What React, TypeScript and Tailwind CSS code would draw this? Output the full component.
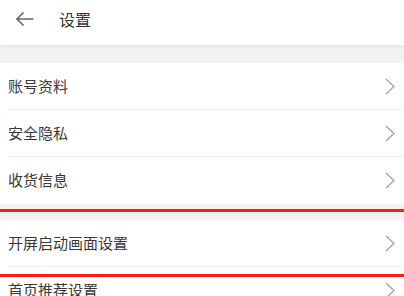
const groups = [
  ["账号资料", "安全隐私", "收货信息"],
  ["开屏启动画面设置", "首页推荐设置"],
];

function Row({ label, last }: { label: string; last: boolean }) {
  return (
    <div className="bg-white pl-2">
      <div className={`flex h-[47px] items-center justify-between pr-[9px] ${last ? "" : "border-b border-[#f2f2f2]"}`}>
        <span className="text-[15px] text-[#383838]">{label}</span>
        <svg className="h-[17px] w-[10px]" viewBox="0 0 10 17" fill="none" stroke="#9e9e9e" strokeWidth="1.2">
          <path d="M1 1l8 7.5L1 16" />
        </svg>
      </div>
    </div>
  );
}

export default function App() {
  return (
    <div
      className="relative h-[296px] w-[404px] overflow-hidden bg-[#f2f2f2]"
      style={{ fontFamily: '"Noto Sans CJK SC", "Noto Sans", sans-serif' }}
    >
      {/* 顶部栏 */}
      <div className="flex h-[45px] items-center bg-white shadow-[0_1px_3px_rgba(0,0,0,0.08)]">
        <svg className="-mt-[8px] ml-[15px] h-[16px] w-[19px]" viewBox="0 0 19 16" fill="none" stroke="#666" strokeWidth="1.6">
          <path d="M18.5 8H2M8.5 1.5L2 8l6.5 6.5" />
        </svg>
        <span className="-mt-[8px] ml-[25px] text-[16px] text-[#333333]">设置</span>
      </div>

      <div className="mt-[18px] space-y-4">
        {groups.map((g, gi) => (
          <div key={gi}>
            {g.map((label, i) => (
              <Row key={label} label={label} last={i === g.length - 1} />
            ))}
          </div>
        ))}
      </div>

      {/* 标注框 */}
      <div className="absolute left-0 top-[209px] h-[3px] w-full bg-[#ff1a1a]" />
      <div className="absolute left-0 top-[274px] h-[3px] w-full bg-[#ff1a1a]" />
    </div>
  );
}
